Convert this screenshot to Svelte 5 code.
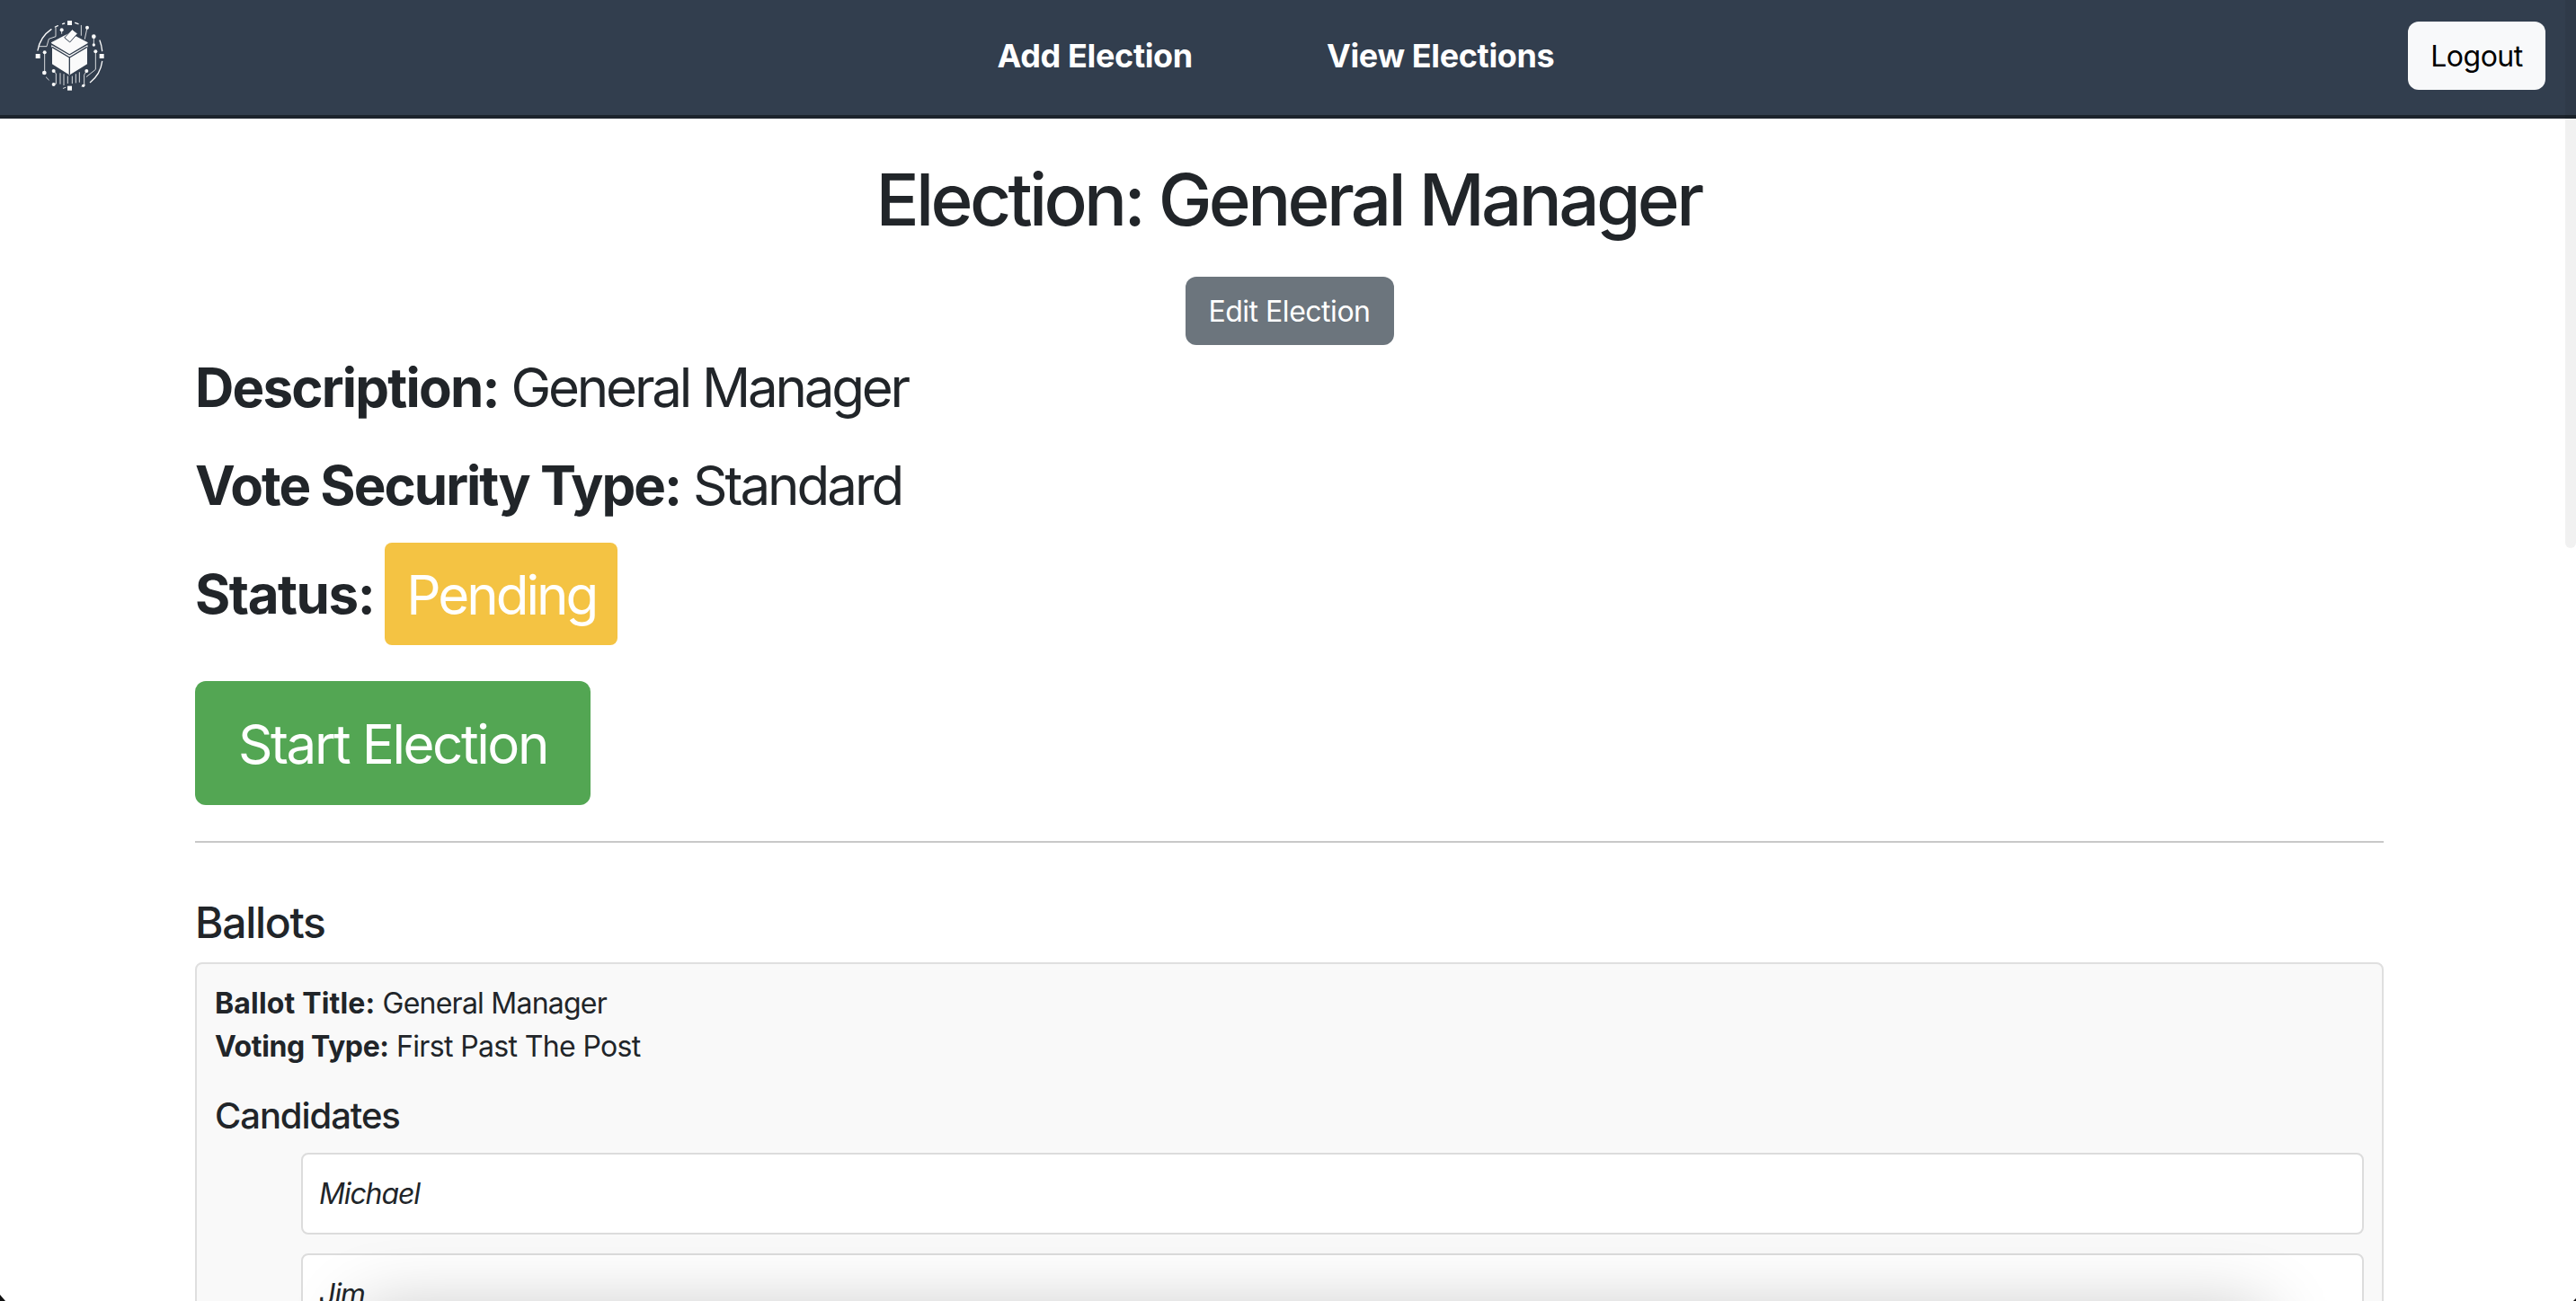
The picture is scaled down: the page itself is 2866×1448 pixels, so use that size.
<script>
  const candidates = ['Michael', 'Jim', 'Dwight'];
</script>

<div class="window">
  <nav class="nav">
    <a class="logo" href="#home" aria-label="Home">
      <svg viewBox="110 66 240 240" width="80" height="80" fill="none" stroke="#fafafa" stroke-width="4" stroke-linecap="round" stroke-linejoin="round">
        <path class="fill" d="M172 153 231 187 231 248 175 213 175 160Z" />
        <path class="fill" d="M290 153 231 187 231 248 288 213 288 160Z" />
        <path class="fill" d="M172 143 231 112 290 143 231 178Z" />
        <path d="M174 158 231 192 288 158M231 192V248" stroke="#323e4e" stroke-width="4" />
        <path class="fill" d="M215 125 240 98 258 112 233 140Z" stroke="#323e4e" stroke-width="3" />
        <g class="fill" stroke="none">
          <rect x="224" y="69" width="15" height="15" />
          <rect x="118" y="180" width="15" height="15" />
          <rect x="331" y="180" width="15" height="15" />
          <rect x="224" y="287" width="15" height="15" />
          <circle cx="148" cy="175" r="6" />
          <circle cx="147" cy="243" r="7" />
          <circle cx="178" cy="237" r="6" />
          <circle cx="288" cy="237" r="6" />
          <circle cx="318" cy="172" r="6" />
          <circle cx="312" cy="122" r="7" />
          <circle cx="312" cy="150" r="5" />
          <circle cx="290" cy="92" r="6" />
          <circle cx="205" cy="100" r="6" />
          <circle cx="178" cy="282" r="6" />
          <circle cx="277" cy="286" r="5" />
        </g>
        <path d="M125 168A107 107 0 0 1 170 98M183 90 192 86M208 80 214 78M250 76 260 80M332 135Q338 150 340 170M340 205A107 107 0 0 1 300 275" />
        <path stroke-width="2.5" d="M132 155H155L162 130 185 122V92M205 100V112M270 85V118M290 92 282 130M312 122V150M148 175V243M153 258 162 267M178 237 186 246V280H176M200 245V280M212 248V284M225 255V278M240 255V278M252 248V276M264 242V274M288 237 280 250V282M318 172V232L288 256M210 295 218 292M272 288 282 283" />
      </svg>
    </a>
    <div class="links">
      <a href="#add">Add Election</a>
      <a href="#view">View Elections</a>
    </div>
    <button class="logout">Logout</button>
  </nav>

  <main class="container">
    <h1>Election: General Manager</h1>
    <div class="center">
      <button class="edit">Edit Election</button>
    </div>
    <h2 class="meta first"><strong>Description:</strong> General Manager</h2>
    <h2 class="meta second"><strong>Vote Security Type:</strong> Standard</h2>
    <h2 class="status"><strong>Status:</strong> <span class="badge">Pending</span></h2>
    <button class="start">Start Election</button>
    <hr />
    <h3 class="ballots">Ballots</h3>
    <section class="card">
      <p><strong>Ballot Title:</strong> General Manager</p>
      <p class="voting"><strong>Voting Type:</strong> First Past The Post</p>
      <h4>Candidates</h4>
      <ul>
        {#each candidates as name}
          <li><em>{name}</em></li>
        {/each}
      </ul>
    </section>
  </main>

  <div class="scrollbar"></div>
  <div class="dock-shadow"></div>
  <div class="corner left"></div>
  <div class="corner right"></div>
</div>

<style>
  :global(body) {
    margin: 0;
    background: #fff;
  }
  .window {
    position: relative;
    height: 1448px;
    overflow: hidden;
    font-family: Inter, "Liberation Sans", sans-serif;
    color: #212529;
    background: #fff;
  }
  .nav {
    box-sizing: border-box;
    height: 132px;
    display: grid;
    grid-template-columns: 1fr auto 1fr;
    align-items: center;
    padding: 0 34px 4px 37px;
    background: #323e4e;
    border-bottom: 4px solid #1c232c;
  }
  .logo {
    display: block;
    height: 80px;
    width: 80px;
  }
  .logo .fill,
  .logo g {
    fill: #fafafa;
  }
  .links {
    display: flex;
    gap: 149px;
    margin-right: 30px;
  }
  .links a {
    color: #fff;
    font-size: 36px;
    font-weight: 700;
    letter-spacing: -0.01em;
    text-decoration: none;
  }
  button {
    font-family: inherit;
    border: 0;
    border-radius: 12px;
  }
  .logout {
    justify-self: end;
    height: 76px;
    width: 153px;
    font-size: 32px;
    letter-spacing: -0.015em;
    color: #000;
    background: #f8f9fa;
  }
  .container {
    margin-left: 217px;
    width: 2435px;
  }
  h1 {
    margin: 42px 0 38px;
    padding-right: 2px;
    text-align: center;
    font-size: 80px;
    line-height: 96px;
    font-weight: 500;
    letter-spacing: -0.046em;
  }
  .center {
    display: flex;
    justify-content: center;
  }
  .edit {
    width: 232px;
    height: 76px;
    font-size: 32px;
    letter-spacing: -0.015em;
    color: #fff;
    background: #6c757d;
  }
  .meta {
    margin: 0;
    font-size: 60px;
    line-height: 72px;
    font-weight: 400;
    letter-spacing: -0.053em;
  }
  .meta strong {
    letter-spacing: -0.03em;
  }
  .second {
    margin-top: 37px;
    letter-spacing: -0.05em;
  }
  .second strong {
    letter-spacing: -0.033em;
  }
  .status strong {
    letter-spacing: -0.024em;
  }
  .first {
    margin-top: 11px;
  }
  .status {
    display: flex;
    align-items: center;
    gap: 12px;
    margin: 28px 0 40px;
    font-size: 60px;
    font-weight: 400;
    line-height: 114px;
    letter-spacing: -0.05em;
  }
  .badge {
    display: block;
    box-sizing: border-box;
    width: 259px;
    height: 114px;
    padding-top: 1px;
    text-align: center;
    color: #fff;
    background: #f4c343;
    border-radius: 8px;
  }
  .start {
    display: block;
    width: 440px;
    height: 138px;
    padding: 2px 0 0;
    font-size: 60px;
    letter-spacing: -0.04em;
    color: #fff;
    background: #53a653;
  }
  hr {
    height: 2px;
    margin: 40px 0 0;
    border: 0;
    background: #c8c8c8;
  }
  .ballots {
    margin: 60px 0 15px;
    font-size: 48px;
    line-height: 58px;
    font-weight: 500;
    letter-spacing: -0.027em;
  }
  .card {
    box-sizing: border-box;
    padding: 20px 20px 0 20px;
    height: 800px;
    background: #f9f9f9;
    border: 2px solid #dfdfdf;
    border-radius: 8px;
  }
  .card p {
    margin: 0;
    font-size: 32px;
    line-height: 48px;
    letter-spacing: -0.024em;
  }
  .card p strong {
    letter-spacing: 0.005em;
  }
  .card p.voting {
    letter-spacing: -0.02em;
  }
  .card p.voting strong {
    letter-spacing: -0.012em;
  }
  h4 {
    margin: 29px 0 17px;
    font-size: 40px;
    line-height: 48px;
    font-weight: 500;
    letter-spacing: -0.027em;
  }
  ul {
    margin: 0;
    padding: 0 0 0 96px;
    list-style: none;
  }
  li {
    box-sizing: border-box;
    height: 91px;
    margin-bottom: 21px;
    padding: 0 18px;
    display: flex;
    align-items: center;
    font-size: 32px;
    letter-spacing: -0.035em;
    background: #fff;
    border: 2px solid #dcdcdc;
    border-radius: 8px;
  }
  .scrollbar {
    position: absolute;
    top: 0;
    right: 0;
    width: 12px;
    height: 610px;
    background: rgba(0, 0, 0, 0.055);
    border-radius: 0 0 6px 6px;
  }
  .dock-shadow {
    position: absolute;
    left: 420px;
    width: 2080px;
    top: 1478px;
    height: 40px;
    box-shadow: 0 0 80px 20px rgba(0, 0, 0, 0.24);
  }
  .corner {
    position: absolute;
    bottom: 0;
    background: #111;
  }
  .corner.left {
    left: 0;
    width: 6px;
    height: 7px;
    clip-path: polygon(0 0, 100% 100%, 0 100%);
  }
  .corner.right {
    right: 0;
    width: 3px;
    height: 3px;
    clip-path: polygon(100% 0, 100% 100%, 0 100%);
  }
</style>
